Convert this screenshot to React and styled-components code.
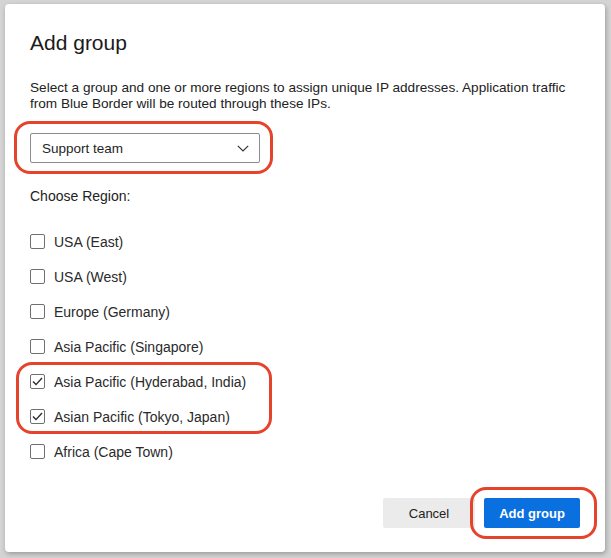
import React, { useState } from "react";
import styled, { createGlobalStyle } from "styled-components";

const GlobalStyle = createGlobalStyle`
  * { box-sizing: border-box; }
  html, body {
    margin: 0;
    padding: 0;
    background: #d4d4d4;
    font-family: "Liberation Sans", Arial, sans-serif;
  }
`;

const Page = styled.div`
  width: 611px;
  height: 558px;
  padding: 4px 6px 6px 5px;
  background: #d4d4d4;
`;

const Dialog = styled.div`
  width: 600px;
  height: 548px;
  background: #fff;
  border-radius: 4px;
  box-shadow: 1px 2px 5px rgba(0, 0, 0, 0.28);
  padding: 27px 25px 24px 25px;
  display: flex;
  flex-direction: column;
  color: #1f1f1f;
`;

const Title = styled.h2`
  margin: 0 0 25px;
  font-size: 21px;
  line-height: 24px;
  font-weight: 400;
  color: #1a1a1a;
`;

const Description = styled.p`
  margin: 0;
  font-size: 13.6px;
  line-height: 16px;
  color: #222;
`;

// red annotation ring drawn over a part
const Highlight = styled.div`
  position: relative;
  width: ${(p) => p.$width};
  margin-top: ${(p) => p.$top || "0"};

  &::after {
    content: "";
    position: absolute;
    inset: ${(p) => p.$inset};
    border: 3px solid #e6432d;
    border-radius: 16px;
    pointer-events: none;
  }
`;

const SelectBox = styled.div`
  height: 30px;
  border: 1px solid #8c8c8c;
  border-radius: 2px;
  display: flex;
  align-items: center;
  justify-content: space-between;
  padding: 0 10px 0 11px;
  font-size: 13.5px;
  color: #1f1f1f;
  background: #fff;
`;

const SectionLabel = styled.div`
  margin: 25px 0 20px;
  font-size: 14px;
  line-height: 16px;
  color: #222;
`;

const Regions = styled.div`
  display: flex;
  flex-direction: column;
`;

const Row = styled.label`
  height: 35px;
  display: flex;
  align-items: center;
  gap: 9px;
  font-size: 14px;
  color: #2a2a2a;
  cursor: pointer;
`;

const Box = styled.span`
  width: 15px;
  height: 15px;
  border: 1px solid #707070;
  border-radius: 2px;
  background: #fff;
  display: flex;
  align-items: center;
  justify-content: center;
  flex-shrink: 0;
`;

const Footer = styled.div`
  margin-top: 29px;
  display: flex;
  justify-content: flex-end;
  gap: 9px;
`;

const Button = styled.button`
  height: 30px;
  width: ${(p) => (p.$primary ? "96px" : "92px")};
  border: none;
  border-radius: 2px;
  font-family: inherit;
  font-size: 13px;
  font-weight: ${(p) => (p.$primary ? 700 : 400)};
  background: ${(p) => (p.$primary ? "#0a70e0" : "#ebebeb")};
  color: ${(p) => (p.$primary ? "#fff" : "#222")};
  cursor: pointer;
`;

const Chevron = () => (
  <svg width="12" height="7" viewBox="0 0 12 7" fill="none">
    <path d="M0.8 0.8 L6 6 L11.2 0.8" stroke="#333" strokeWidth="1.2" />
  </svg>
);

const Check = () => (
  <svg width="11" height="9" viewBox="0 0 11 9" fill="none">
    <path d="M1 4.6 L4 7.6 L10 1" stroke="#2b2b2b" strokeWidth="1.4" />
  </svg>
);

const regions = [
  "USA (East)",
  "USA (West)",
  "Europe (Germany)",
  "Asia Pacific (Singapore)",
  "Asia Pacific (Hyderabad, India)",
  "Asian Pacific (Tokyo, Japan)",
  "Africa (Cape Town)",
];

const Region = ({ name, checked, onToggle }) => (
  <Row onClick={onToggle}>
    <Box>{checked && <Check />}</Box>
    {name}
  </Row>
);

const App = () => {
  const [checked, setChecked] = useState({
    "Asia Pacific (Hyderabad, India)": true,
    "Asian Pacific (Tokyo, Japan)": true,
  });

  const toggle = (name) =>
    setChecked((prev) => ({ ...prev, [name]: !prev[name] }));

  const row = (name) => (
    <Region
      key={name}
      name={name}
      checked={!!checked[name]}
      onToggle={() => toggle(name)}
    />
  );

  return (
    <>
      <GlobalStyle />
      <Page>
        <Dialog>
          <Title>Add group</Title>
          <Description>
            Select a group and one or more regions to assign unique IP
            addresses. Application traffic from Blue Border will be routed
            through these IPs.
          </Description>
          <Highlight $width="230px" $top="21px" $inset="-12px -13px -11px -16px">
            <SelectBox>
              Support team
              <Chevron />
            </SelectBox>
          </Highlight>
          <SectionLabel>Choose Region:</SectionLabel>
          <Regions>
            {regions.slice(0, 4).map(row)}
            <Highlight $width="230px" $inset="-2px -12px 0 -14px">
              {regions.slice(4, 6).map(row)}
            </Highlight>
            {regions.slice(6).map(row)}
          </Regions>
          <Footer>
            <Button>Cancel</Button>
            <Highlight $inset="-11px -17px -11px -14px">
              <Button $primary>Add group</Button>
            </Highlight>
          </Footer>
        </Dialog>
      </Page>
    </>
  );
};

export default App;
